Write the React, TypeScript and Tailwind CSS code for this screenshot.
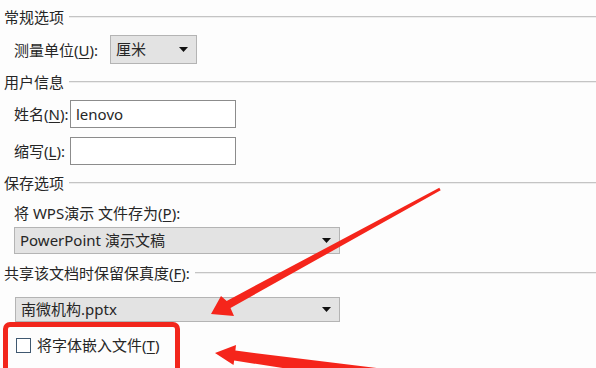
import React from "react";

function Caret() {
  return (
    <svg width="9" height="5" viewBox="0 0 9 5" className="shrink-0">
      <path d="M0 0h9L4.5 5z" fill="#111" />
    </svg>
  );
}

function Group({ title }: { title: React.ReactNode }) {
  return (
    <div className="flex items-center h-[20px]">
      <span className="text-[15px] leading-[20px] whitespace-nowrap">{title}</span>
      <div className="flex-1 ml-[5px] border-t border-b border-t-[#c4c4c4] border-b-[#ededed]" />
    </div>
  );
}

function Key({ k }: { k: string }) {
  return (
    <>
      (<span className="underline underline-offset-2">{k}</span>)
    </>
  );
}

export default function App() {
  return (
    <div className="relative w-[596px] h-[368px] overflow-hidden bg-[#fdfdfd] text-[#262626] font-['Noto_Sans','Noto_Sans_CJK_SC',sans-serif]">
      <div className="flex flex-col pl-[4px]">
        <div className="mt-[7px]">
          <Group title="常规选项" />
        </div>

        <div className="mt-[8px] flex items-center pl-[10px] h-[29px]">
          <span className="w-[96px] text-[15px] leading-[20px]">
            测量单位<Key k="U" />:
          </span>
          <div className="w-[87px] h-[29px] flex items-center justify-between pl-[5px] pr-[8px] bg-[#e3e3e3] border border-[#b4b4b4] text-[15px]">
            <span>厘米</span>
            <Caret />
          </div>
        </div>

        <div className="mt-[8px]">
          <Group title="用户信息" />
        </div>

        <div className="mt-[8px] flex items-center pl-[10px] h-[28px]">
          <span className="w-[56px] text-[15px] leading-[20px]">
            姓名<Key k="N" />:
          </span>
          <div className="w-[166px] h-[28px] flex items-center pl-[5px] bg-white border border-[#8c8c8c] text-[15px]">
            lenovo
          </div>
        </div>

        <div className="mt-[9px] flex items-center pl-[10px] h-[28px]">
          <span className="w-[56px] text-[15px] leading-[20px]">
            缩写<Key k="L" />:
          </span>
          <div className="w-[166px] h-[28px] bg-white border border-[#8c8c8c]" />
        </div>

        <div className="mt-[8px]">
          <Group title="保存选项" />
        </div>

        <div className="mt-[10px] pl-[10px] text-[15px] leading-[20px]">
          将 WPS演示 文件存为<Key k="P" />:
        </div>

        <div className="mt-[4px] ml-[10px] w-[326px] h-[27px] flex items-center justify-between pl-[5px] pr-[8px] bg-[#e3e3e3] border border-[#b4b4b4] text-[15px]">
          <span>PowerPoint 演示文稿</span>
          <Caret />
        </div>

        <div className="mt-[9px]">
          <Group
            title={
              <>
                共享该文档时保留保真度<Key k="F" />:
              </>
            }
          />
        </div>

        <div className="mt-[14px] ml-[11px] w-[325px] h-[25px] flex items-center justify-between pl-[5px] pr-[8px] bg-[#e3e3e3] border border-[#b4b4b4] text-[15px]">
          <span>南微机构.pptx</span>
          <Caret />
        </div>

        <div className="mt-[13px] ml-[12px] flex items-center h-[20px]">
          <div className="w-[15px] h-[15px] border border-[#3f5870] bg-white" />
          <span className="ml-[6px] text-[15px] leading-[20px]">
            将字体嵌入文件<Key k="T" />
          </span>
        </div>
      </div>

      {/* red highlight box */}
      <div className="absolute left-[3px] top-[322px] w-[177px] h-[60px] border-[5px] border-[#f2261c] rounded-[7px]" />

      {/* annotation arrows */}
      <svg className="absolute inset-0" width="596" height="368" viewBox="0 0 596 368">
        <polygon
          points="211,314 221,296 226.7,300.9 439.3,187.7 440.7,190.3 230.5,307.9 234,316"
          fill="#f5251b"
        />
        <polygon
          points="215,353 236,345 235.4,350.6 620,398 610,418 234.2,360.6 233.5,365"
          fill="#f5251b"
        />
      </svg>
    </div>
  );
}
